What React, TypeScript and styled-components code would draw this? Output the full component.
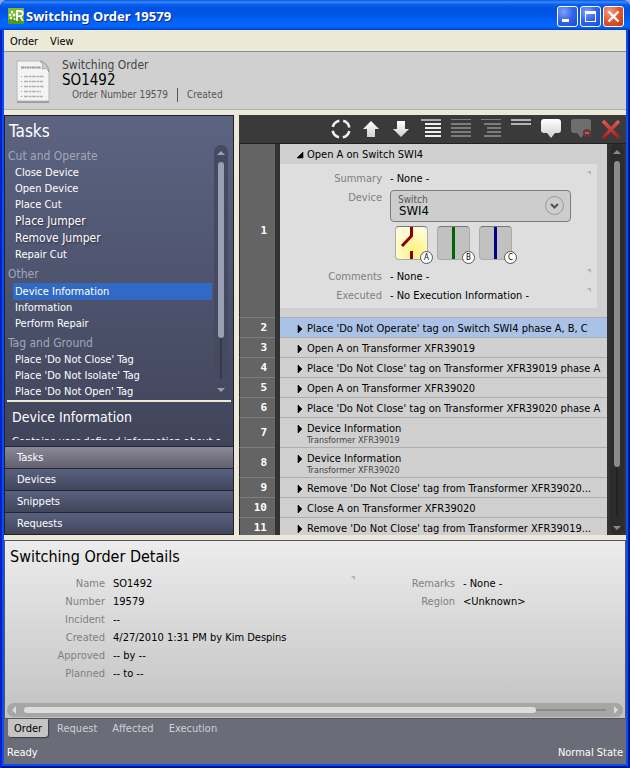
import React, { useState } from "react";
import styled, { createGlobalStyle, css } from "styled-components";

const ui = `"DejaVu Sans Condensed", "DejaVu Sans", "Noto Sans", sans-serif`;

const GlobalStyle = createGlobalStyle`
  * { box-sizing: border-box; }
  body {
    margin: 0;
    background: #8fa9e6;
    font: 11px/16px ${ui};
    color: #000;
  }
  button, select { font: inherit; color: inherit; margin: 0; padding: 0; border: 0; background: none; text-align: left; }
  h1, h2, h3, p, ul, ol, dl, dd { margin: 0; padding: 0; font-weight: normal; list-style: none; }
`;

/* ---------- window frame ---------- */

const Window = styled.div`
  display: flex;
  flex-direction: column;
  height: 100vh;
  min-height: 640px;
  padding: 0 4px 4px;
  overflow: hidden;
  border-radius: 8px 8px 0 0;
  background: #0a4fe8;
  box-shadow: inset 2px 0 0 #0a1fcc, inset -2px -2px 0 #00149a;
`;

const TitleBar = styled.header`
  display: flex;
  align-items: center;
  flex: none;
  height: 30px;
  margin: 0 -4px;
  padding: 2px 6px 0 8px;
  gap: 2px;
  background: linear-gradient(
    #0a58d8 0%, #3a8cff 7%, #0a60f0 14%, #0053e2 28%,
    #0055e6 50%, #0264fb 75%, #0266ff 88%, #0050dc 96%, #003cc4 100%
  );
`;

const AppTitle = styled.h1`
  flex: 1;
  font: bold 13px/20px "Noto Sans", "Open Sans", sans-serif;
  color: #fff;
  text-shadow: 1px 1px 0 #0a2a88;
  white-space: nowrap;
`;

const CaptionButton = styled.button<{ $close?: boolean }>`
  display: grid;
  place-items: center;
  width: 21px;
  height: 21px;
  border: 1px solid #fff;
  border-radius: 3px;
  background: ${(p) =>
    p.$close
      ? "radial-gradient(circle at 30% 25%, #f0a088, #e2552c 50%, #c43a10)"
      : "radial-gradient(circle at 30% 25%, #7ea0f8, #3264ea 50%, #1c48cc)"};
`;

const CaptionButtons = styled.div`
  display: flex;
  gap: 2px;
`;

const MenuBar = styled.nav`
  display: flex;
  flex: none;
  gap: 12px;
  height: 22px;
  padding: 2px 6px 0;
  background: #ece9d8;
  border-bottom: 1px solid #8e8d85;
`;

const Banner = styled.section`
  display: flex;
  flex: none;
  gap: 12px;
  height: 58px;
  padding: 6px 12px 0;
  background: #d0d0d0;
  border-bottom: 1px solid #b0b0aa;
`;

const BannerKind = styled.p`
  font-size: 12px;
  line-height: 15px;
  color: #444;
`;

const BannerName = styled.h2`
  font-size: 15px;
  line-height: 15px;
`;

const BannerFacts = styled.p`
  display: flex;
  gap: 9px;
  padding-left: 10px;
  font-size: 10px;
  line-height: 14px;
  color: #555;
  span + span { padding-left: 9px; border-left: 1px solid #555; }
`;

const Body = styled.main`
  display: grid;
  flex: 1;
  min-height: 0;
  grid-template-columns: minmax(0, 230fr) minmax(0, 387fr);
  gap: 5px;
  padding: 5px 0;
  background: #ece9d8;
`;

/* ---------- scroll bars ---------- */

const VTrack = styled.div<{ $tone: "blue" | "dark" }>`
  display: flex;
  flex-direction: column;
  align-items: center;
  flex: none;
  width: 14px;
  padding: 6px 0 5px;
  border-radius: 7px;
  color: ${(p) => (p.$tone === "blue" ? "#9a9fb4" : "#8a8a8a")};
  background: ${(p) => (p.$tone === "blue" ? "#454a60" : "#2c2c2c")};
`;

const VRail = styled.div<{ $tone: "blue" | "dark" }>`
  display: flex;
  justify-content: center;
  flex: 1;
  width: 6px;
  margin: 7px 0 9px;
  background: linear-gradient(90deg, transparent 2px, ${(p) => (p.$tone === "blue" ? "#34384a" : "#222")} 2px 4px, transparent 4px);
`;

const VThumb = styled.div<{ $size: string }>`
  width: 6px;
  height: ${(p) => p.$size};
  border-radius: 3px;
  background: currentColor;
`;

const HTrack = styled.div`
  display: flex;
  align-items: center;
  height: 14px;
  margin: 0 2px 1px;
  padding: 0 5px;
  gap: 8px;
  border-radius: 7px;
  color: #dcdcdc;
  background: #a6a6a6;
`;

const HRail = styled.div`
  flex: 1;
  height: 6px;
  background: linear-gradient(transparent 2px, #8c8c8c 2px 4px, transparent 4px);
`;

const HThumb = styled.div`
  width: 88%;
  height: 6px;
  border-radius: 3px;
  background: currentColor;
`;

const Tip = ({ d, w = 8, h = 4 }: { d: string; w?: number; h?: number }) => (
  <svg width={w} height={h} viewBox={`0 0 ${w} ${h}`} aria-hidden><path d={d} fill="currentColor" /></svg>
);

const VScroll = ({ tone, size }: { tone: "blue" | "dark"; size: string }) => (
  <VTrack $tone={tone} aria-hidden>
    <Tip d="M0 4 4 0 8 4z" />
    <VRail $tone={tone}><VThumb $size={size} /></VRail>
    <Tip d="M0 0 4 4 8 0z" />
  </VTrack>
);

/* ---------- task panel ---------- */

const TaskPanel = styled.aside`
  display: flex;
  flex-direction: column;
  min-height: 0;
  border: 1px solid #1e202c;
  color: #fff;
  background: linear-gradient(#5c6482, #40445a 80%);
`;

const PanelTitle = styled.h2`
  flex: none;
  padding: 5px 4px 4px;
  font-size: 17px;
  line-height: 20px;
`;

const TaskScroller = styled.div`
  display: flex;
  flex: 1;
  min-height: 0;
  padding: 0 5px 3px 3px;
  gap: 2px;
`;

const TaskList = styled.div`
  flex: 1;
  min-width: 0;
  padding-top: 3px;
  overflow: hidden;
`;

const GroupName = styled.h3`
  font-size: 12px;
  line-height: 17px;
  color: #a3a7b8;
  ul + & { margin-top: 3px; }
`;

const TaskButton = styled.button<{ $selected?: boolean; $raised?: boolean }>`
  display: block;
  width: calc(100% - 5px);
  margin-left: 5px;
  padding-left: 2px;
  line-height: 16px;
  white-space: nowrap;
  ${(p) => p.$selected && css`background: #316ac5; line-height: 17px;`}
  ${(p) => p.$raised && css`font-size: 12px; line-height: 17px; text-shadow: 1px 1px 2px #2a2d3c;`}
`;

const Description = styled.section`
  flex: none;
  height: 46px;
  margin: 0 2px;
  padding: 6px 5px 0;
  overflow: hidden;
  border-top: 2px solid #ece9d8;
`;

const DescriptionTitle = styled.h3`
  font-size: 14px;
  line-height: 18px;
`;

const DescriptionText = styled.p`
  height: 14px;
  padding-top: 8px;
  overflow: hidden;
  line-height: 16px;
  white-space: nowrap;
`;

const SectionButton = styled.button<{ $active?: boolean }>`
  display: block;
  flex: none;
  height: 22px;
  padding-left: 12px;
  border-top: 1px solid #23252f;
  background: ${(p) => (p.$active ? "linear-gradient(#8b8899, #62606c)" : "linear-gradient(#586180, #42465b)")};
`;

/* ---------- step panel ---------- */

const StepPanel = styled.section`
  display: flex;
  flex-direction: column;
  min-height: 0;
  background: #333;
`;

const Toolbar = styled.div`
  display: flex;
  align-items: center;
  justify-content: flex-end;
  flex: none;
  height: 29px;
  padding-right: 4px;
  gap: 8px;
  background: #3a3a3a;
  border-bottom: 1px solid #222;
`;

const ToolButton = styled.button`
  display: grid;
  place-items: center;
  width: 22px;
  height: 24px;
  &:disabled { opacity: 0.4; }
`;

const StepScroller = styled.div`
  display: flex;
  flex: 1;
  min-height: 0;
  padding-right: 2px;
`;

const StepList = styled.ol`
  flex: 1;
  min-width: 0;
  margin-right: 3px;
  overflow: hidden;
`;

const Step = styled.li<{ $selected?: boolean }>`
  display: grid;
  grid-template-columns: 36px minmax(0, 1fr);
  column-gap: 5px;
  color: #000;
  --row: ${(p) => (p.$selected ? "#a9c2e6" : "#d0d0d0")};
`;

const StepNumber = styled.div`
  display: flex;
  align-items: center;
  justify-content: flex-end;
  padding: 1px 8px 0 0;
  border-left: 1px solid #2a2a2a;
  border-bottom: 1px solid #7c7c7c;
  background: #646464;
  color: #fff;
  font: bold 11px/14px "DejaVu Sans Mono", monospace;
`;

const StepContent = styled.div`
  border-bottom: 1px solid #aeaeae;
  background: var(--row);
`;

const StepHeader = styled.button`
  display: grid;
  grid-template-columns: 11px minmax(0, 1fr);
  align-items: center;
  width: 100%;
  padding: 2px 4px 0 16px;
  line-height: 17px;
`;

const StepTitle = styled.span`
  overflow: hidden;
  white-space: nowrap;
  text-overflow: ellipsis;
`;

const StepNote = styled.p`
  margin-top: -3px;
  padding-left: 27px;
  font-size: 9px;
  line-height: 13px;
  color: #444;
`;

const StepDetails = styled.dl`
  display: grid;
  grid-template-columns: 102px minmax(0, 1fr);
  column-gap: 8px;
  row-gap: 3px;
  align-items: start;
  margin: 1px 10px 9px 0;
  padding: 7px 6px 4px 0;
  background: #dedede;
`;

const Label = styled.dt`
  color: #808080;
  text-align: right;
`;

const Value = styled.dd`
  display: flex;
  justify-content: space-between;
  white-space: nowrap;
`;

const DeviceField = styled.dd`
  display: flex;
  flex-direction: column;
  gap: 4px;
  padding-bottom: 6px;
`;

const DeviceBox = styled.div`
  position: relative;
  width: 181px;
  max-width: 100%;
`;

const DeviceKind = styled.label`
  position: absolute;
  top: 4px;
  left: 8px;
  font-size: 10px;
  line-height: 12px;
  color: #555;
  pointer-events: none;
`;

const DeviceSelect = styled.select`
  display: block;
  width: 100%;
  height: 32px;
  padding: 10px 30px 0 8px;
  appearance: none;
  border: 1px solid #7c7c7c;
  border-radius: 4px;
  background: #cdcdcd;
  font-size: 13px;
`;

const DeviceArrow = styled.svg`
  position: absolute;
  top: 6px;
  right: 7px;
  pointer-events: none;
`;

const Phases = styled.div`
  display: flex;
  gap: 9px;
  padding-left: 5px;
`;

const PhaseButton = styled.button<{ $open?: boolean }>`
  position: relative;
  width: 33px;
  height: 34px;
  border: 1px solid #aaa;
  border-top-color: #777;
  border-radius: 4px;
  background: ${(p) => (p.$open ? "radial-gradient(circle at 60% 75%, #fdf37a, #fffbd8 70%)" : "#c1c1c1")};
  svg { display: block; }
`;

const PhaseBadge = styled.span`
  position: absolute;
  right: -6px;
  bottom: -5px;
  width: 13px;
  height: 13px;
  border: 1px solid #555;
  border-radius: 50%;
  background: #fff;
  font-size: 8px;
  line-height: 11px;
  text-align: center;
`;

const Corner = () => (
  <svg width="4" height="4" viewBox="0 0 4 4" aria-hidden><path d="M0 0h4v4z" fill="#b2b2b2" /></svg>
);

/* ---------- details and footer ---------- */

const Details = styled.section`
  flex: none;
  border: 1px solid #55565f;
  background: linear-gradient(#ececec, #c2c2c2);
`;

const DetailsTitle = styled.h2`
  padding: 6px 5px 9px;
  font-size: 16px;
  line-height: 20px;
`;

const DetailsColumns = styled.div`
  display: grid;
  grid-template-columns: minmax(0, 350fr) minmax(0, 270fr);
  height: 127px;
`;

const Facts = styled.dl`
  display: grid;
  grid-template-columns: 100px minmax(0, 1fr);
  gap: 2px 8px;
  align-content: start;
`;

const Tabs = styled.div`
  display: flex;
  flex: none;
  height: 22px;
  padding-left: 4px;
  background: #6a6c78;
`;

const Tab = styled.button<{ $active?: boolean }>`
  height: 18px;
  margin-right: 3px;
  padding: 1px 6px 0;
  border-radius: 0 0 3px 3px;
  color: ${(p) => (p.$active ? "#000" : "#cfd0d6")};
  background: ${(p) => (p.$active ? "#c4c4c4" : "transparent")};
  box-shadow: ${(p) => (p.$active ? "1px 1px 1px #3c3d45" : "none")};
`;

const StatusBar = styled.footer`
  display: flex;
  justify-content: space-between;
  flex: none;
  height: 23px;
  padding: 4px 3px 0;
  color: #fff;
  background: #6a6c78;
`;

/* ---------- drawings ---------- */

const AppIcon = () => (
  <svg width="16" height="16" viewBox="0 0 16 16" aria-hidden>
    <rect width="16" height="16" fill="#4f9a1c" />
    <path d="M0 0h16v5L0 12z" fill="#7cbc34" />
    <path d="M9 13V3h3.2a2.6 2.6 0 0 1 0 5.200H9M12 8l3 5" fill="none" stroke="#fff" strokeWidth="1.800" />
    <g fill="#fff"><circle cx="4" cy="4" r="1.200" /><circle cx="2" cy="7" r="1.200" /><circle cx="6" cy="7" r="1.400" /><circle cx="3" cy="10" r="1.200" /><circle cx="6.500" cy="11" r="1.100" /></g>
  </svg>
);

const Paper = () => (
  <svg width="34" height="46" viewBox="0 0 34 46" aria-hidden>
    <path d="M1 4h24q7 2 8 10v31H1z" fill="#999" />
    <path d="M1 3h24q7 2 8 10v30H1z" fill="#f4f4f4" stroke="#b8b8b8" />
    <path d="M24 3q4 3 2 8 5-2 7 3-1-9-9-11z" fill="#c8c8c8" stroke="#8a8a8a" strokeWidth=".6" />
    <path d="M5 9.500h20" stroke="#999" strokeWidth="2" strokeDasharray="3 .5 1.500 .4" />
    <g stroke="#b0b0b0" strokeWidth="1.600" strokeDasharray="4 .8 2.500 .5">
      <path d="M8 18.500h20M8 23.500h19M8 28.500h20M8 33.500h17M8 38.500h19" />
    </g>
    <path d="M5.500 18v21.500" stroke="#999" strokeWidth="1" strokeDasharray="1 4" />
  </svg>
);

const Shine = () => (
  <defs>
    <linearGradient id="shine" x1="0" y1="0" x2="0" y2="1"><stop offset="0" stopColor="#fff" /><stop offset="1" stopColor="#cfcfcf" /></linearGradient>
    <linearGradient id="ember" x1="0" y1="0" x2="0" y2="1"><stop offset="0" stopColor="#e85850" /><stop offset="1" stopColor="#a02020" /></linearGradient>
  </defs>
);

const Glyph = ({ children }: { children: React.ReactNode }) => (
  <svg width="22" height="22" viewBox="0 0 22 22" aria-hidden><Shine />{children}</svg>
);

const bubble = "M4 1h14q3 0 3 3v8q0 3-3 3h-3l-4 5-4-5H4q-3 0-3-3V4q0-3 3-3z";

const tools: { name: string; off?: boolean; icon: React.ReactNode }[] = [
  { name: "Refresh", icon: <Glyph><circle cx="11" cy="11" r="8.500" fill="none" stroke="#f0f0f0" strokeWidth="2.600" strokeDasharray="9.400 3.950" strokeDashoffset="-1.980" /></Glyph> },
  { name: "Move up", icon: <Glyph><path d="M11 3l8 8h-4v8H7v-8H3z" fill="url(#shine)" /></Glyph> },
  { name: "Move down", icon: <Glyph><path d="M11 19l8-8h-4V3H7v8H3z" fill="url(#shine)" /></Glyph> },
  { name: "Insert step", icon: <Glyph><path d="M1 1h20v2H1z" fill="#a8a8a8" /><path d="M5 5h16v2H5zM5 9h16v2H5zM5 13h16v2H5zM5 17h16v2H5z" fill="#eee" /></Glyph> },
  { name: "Outdent", off: true, icon: <Glyph><path d="M1 1h20v1H1zM1 5h20v2H1zM1 9h20v2H1zM1 13h20v2H1zM1 17h20v2H1z" fill="#ddd" /></Glyph> },
  { name: "Indent", off: true, icon: <Glyph><path d="M1 1h20v1H1zM4 5h17v2H4zM7 9h14v2H7zM7 13h14v2H7zM4 17h17v2H4z" fill="#ddd" /></Glyph> },
  { name: "Collapse", icon: <Glyph><path d="M1 1h20v2H1zM1 5h20v2H1z" fill="#b4b4b4" /></Glyph> },
  { name: "Add comment", icon: <Glyph><path d={bubble} fill="url(#shine)" /></Glyph> },
  { name: "Remove comment", off: true, icon: <Glyph><path d={bubble} fill="#bdbdbd" /><circle cx="17" cy="15" r="4" fill="#d02828" /><path d="M15 15h4" stroke="#fff" strokeWidth="1.500" /></Glyph> },
  { name: "Delete", icon: <Glyph><path d="M3 3l16 17M19 3L3 20" stroke="url(#ember)" strokeWidth="3.400" /></Glyph> },
];

const Disclosure = ({ open }: { open?: boolean }) => (
  <svg width="8" height="8" viewBox="0 0 8 8" aria-hidden>
    <path d={open ? "M7 1v6H1z" : "M2 0l4 4-4 4z"} stroke="#000" strokeWidth=".6" />
  </svg>
);

/* ---------- data ---------- */

const taskGroups = [
  { name: "Cut and Operate", tasks: ["Close Device", "Open Device", "Place Cut", "Place Jumper", "Remove Jumper", "Repair Cut"] },
  { name: "Other", tasks: ["Device Information", "Information", "Perform Repair"] },
  { name: "Tag and Ground", tasks: ["Place 'Do Not Close' Tag", "Place 'Do Not Isolate' Tag", "Place 'Do Not Open' Tag"] },
];

const steps: { title: string; note?: string; selected?: boolean }[] = [
  { title: "Place 'Do Not Operate' tag on Switch SWI4 phase A, B, C", selected: true },
  { title: "Open A on Transformer XFR39019" },
  { title: "Place 'Do Not Close' tag on Transformer XFR39019 phase A" },
  { title: "Open A on Transformer XFR39020" },
  { title: "Place 'Do Not Close' tag on Transformer XFR39020 phase A" },
  { title: "Device Information", note: "Transformer XFR39019" },
  { title: "Device Information", note: "Transformer XFR39020" },
  { title: "Remove 'Do Not Close' tag from Transformer XFR39020..." },
  { title: "Close A on Transformer XFR39020" },
  { title: "Remove 'Do Not Close' tag from Transformer XFR39019..." },
];

const orderFacts = [
  ["Name", "SO1492"], ["Number", "19579"], ["Incident", "--"],
  ["Created", "4/27/2010 1:31 PM by Kim Despins"], ["Approved", "-- by --"], ["Planned", "-- to --"],
];

export default function App() {
  const [task, setTask] = useState("Device Information");
  const [section, setSection] = useState("Tasks");
  const [tab, setTab] = useState("Order");

  return (
    <>
      <GlobalStyle />
      <Window>
        <TitleBar>
          <AppIcon />
          <AppTitle>Switching Order 19579</AppTitle>
          <CaptionButtons>
            <CaptionButton aria-label="Minimize"><svg width="19" height="19"><path d="M4 12h7v3H4z" fill="#fff" /></svg></CaptionButton>
            <CaptionButton aria-label="Maximize"><svg width="19" height="19"><path d="M4 4h11v11H4zM5 7v7h9V7z" fill="#fff" fillRule="evenodd" /></svg></CaptionButton>
            <CaptionButton aria-label="Close" $close><svg width="19" height="19"><path d="M4.500 4.500l10 10M14.500 4.500l-10 10" stroke="#fff" strokeWidth="2.400" /></svg></CaptionButton>
          </CaptionButtons>
        </TitleBar>
        <MenuBar>
          <button>Order</button>
          <button>View</button>
        </MenuBar>
        <Banner>
          <Paper />
          <div>
            <BannerKind>Switching Order</BannerKind>
            <BannerName>SO1492</BannerName>
            <BannerFacts><span>Order Number 19579</span><span>Created</span></BannerFacts>
          </div>
        </Banner>

        <Body>
          <TaskPanel>
            <PanelTitle>Tasks</PanelTitle>
            <TaskScroller>
              <TaskList>
                {taskGroups.map((g) => (
                  <React.Fragment key={g.name}>
                    <GroupName>{g.name}</GroupName>
                    <ul>
                      {g.tasks.map((t) => (
                        <li key={t}>
                          <TaskButton $selected={t === task} $raised={t.endsWith("Jumper")} onClick={() => setTask(t)}>{t}</TaskButton>
                        </li>
                      ))}
                    </ul>
                  </React.Fragment>
                ))}
              </TaskList>
              <VScroll tone="blue" size="81%" />
            </TaskScroller>
            <Description>
              <DescriptionTitle>{task}</DescriptionTitle>
              <DescriptionText>Contains user defined information about a</DescriptionText>
            </Description>
            {["Tasks", "Devices", "Snippets", "Requests"].map((s) => (
              <SectionButton key={s} $active={s === section} onClick={() => setSection(s)}>{s}</SectionButton>
            ))}
          </TaskPanel>

          <StepPanel>
            <Toolbar>
              {tools.map((t) => (
                <ToolButton key={t.name} aria-label={t.name} disabled={t.off}>{t.icon}</ToolButton>
              ))}
            </Toolbar>
            <StepScroller>
              <StepList>
                <Step>
                  <StepNumber>1</StepNumber>
                  <StepContent>
                    <StepHeader aria-expanded><Disclosure open /><StepTitle>Open A on Switch SWI4</StepTitle></StepHeader>
                    <StepDetails>
                      <Label>Summary</Label>
                      <Value>- None -<Corner /></Value>
                      <Label>Device</Label>
                      <DeviceField>
                        <DeviceBox>
                          <DeviceKind htmlFor="device">Switch</DeviceKind>
                          <DeviceSelect id="device"><option>SWI4</option></DeviceSelect>
                          <DeviceArrow width="19" height="19" viewBox="0 0 19 19" aria-hidden>
                            <circle cx="9.500" cy="9.500" r="9" fill="none" stroke="#999" />
                            <path d="M6 8l3.500 3.500L13 8" fill="none" stroke="#555" strokeWidth="2.200" />
                          </DeviceArrow>
                        </DeviceBox>
                        <Phases>
                          <PhaseButton $open aria-label="Phase A">
                            <svg width="31" height="32"><path d="M15.500 0v9L6 19M15.500 24v8" fill="none" stroke="#8b0000" strokeWidth="3" /></svg>
                            <PhaseBadge>A</PhaseBadge>
                          </PhaseButton>
                          <PhaseButton aria-label="Phase B">
                            <svg width="31" height="32"><path d="M15.500 0v32" stroke="#006400" strokeWidth="3" /></svg>
                            <PhaseBadge>B</PhaseBadge>
                          </PhaseButton>
                          <PhaseButton aria-label="Phase C">
                            <svg width="31" height="32"><path d="M15.500 0v32" stroke="#00008b" strokeWidth="3" /></svg>
                            <PhaseBadge>C</PhaseBadge>
                          </PhaseButton>
                        </Phases>
                      </DeviceField>
                      <Label>Comments</Label>
                      <Value>- None -<Corner /></Value>
                      <Label>Executed</Label>
                      <Value>- No Execution Information -<Corner /></Value>
                    </StepDetails>
                  </StepContent>
                </Step>
                {steps.map((s, i) => (
                  <Step key={i} $selected={s.selected}>
                    <StepNumber>{i + 2}</StepNumber>
                    <StepContent>
                      <StepHeader aria-expanded={false}><Disclosure /><StepTitle>{s.title}</StepTitle></StepHeader>
                      {s.note && <StepNote>{s.note}</StepNote>}
                    </StepContent>
                  </Step>
                ))}
              </StepList>
              <VScroll tone="dark" size="86%" />
            </StepScroller>
          </StepPanel>
        </Body>

        <Details>
          <DetailsTitle>Switching Order Details</DetailsTitle>
          <DetailsColumns>
            <Facts>
              {orderFacts.map(([k, v]) => (
                <React.Fragment key={k}>
                  <Label>{k}</Label>
                  <Value>{v}{k === "Name" && <Corner />}</Value>
                </React.Fragment>
              ))}
            </Facts>
            <Facts>
              <Label>Remarks</Label><Value>- None -</Value>
              <Label>Region</Label><Value>&lt;Unknown&gt;</Value>
            </Facts>
          </DetailsColumns>
          <HTrack aria-hidden>
            <Tip d="M4 0 0 4 4 8z" w={4} h={8} />
            <HRail><HThumb /></HRail>
            <Tip d="M0 0 4 4 0 8z" w={4} h={8} />
          </HTrack>
        </Details>
        <Tabs role="tablist">
          {["Order", "Request", "Affected", "Execution"].map((t) => (
            <Tab key={t} role="tab" aria-selected={t === tab} $active={t === tab} onClick={() => setTab(t)}>{t}</Tab>
          ))}
        </Tabs>
        <StatusBar><span>Ready</span><span>Normal State</span></StatusBar>
      </Window>
    </>
  );
}
